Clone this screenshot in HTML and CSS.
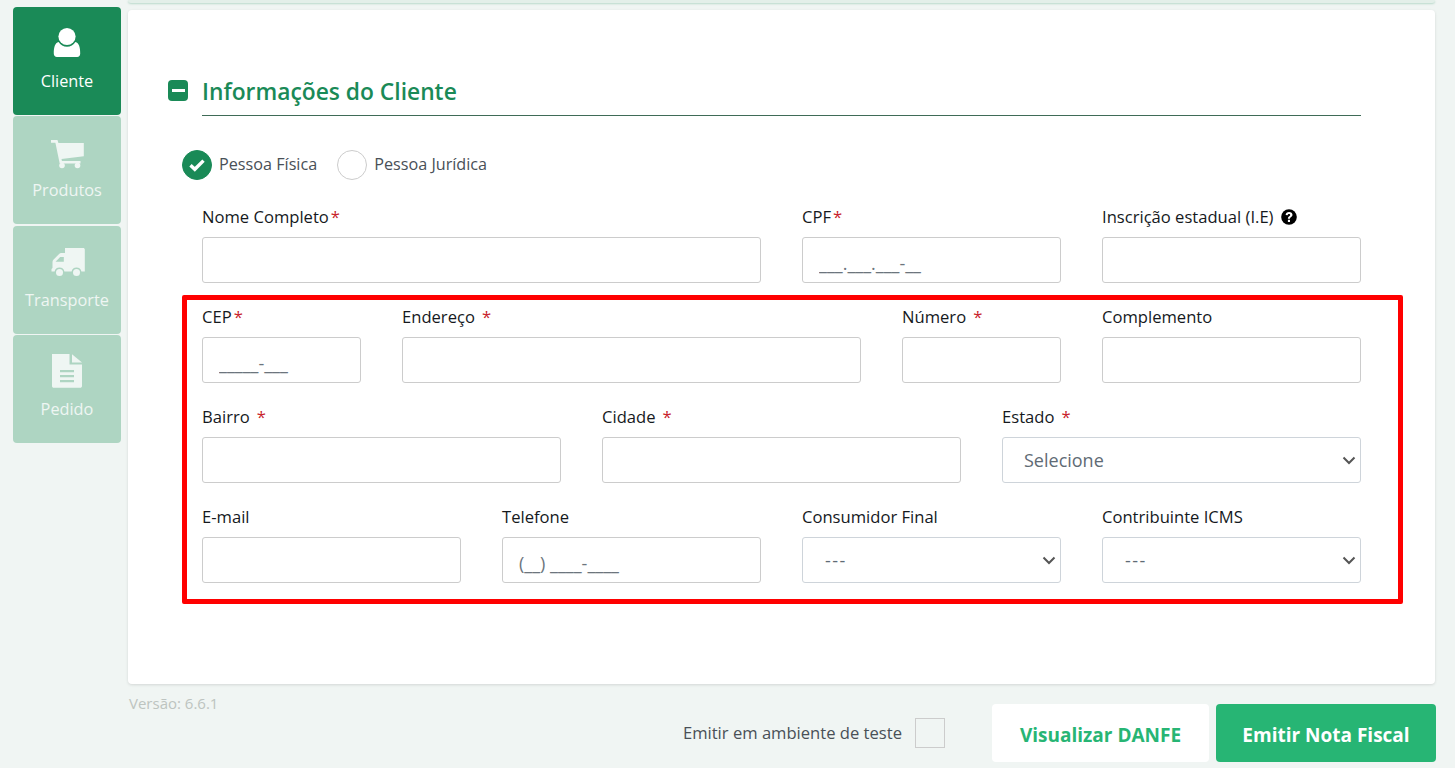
FILE: index.html
```html
<!DOCTYPE html>
<html lang="pt-BR">
<head>
<meta charset="utf-8">
<title>Emissão de Nota Fiscal</title>
<link rel="stylesheet" href="styles.css">
</head>
<body>
<div class="layout">
  <nav class="sidebar">
    <a class="tab active">
      <svg class="tab-icon" width="36" height="34" viewBox="0 0 36 34"><circle cx="18" cy="10.500" r="8.600" fill="currentColor"/><path d="M9.600 16.100c1.900 3 4.900 4.700 8.400 4.700s6.500-1.700 8.400-4.700c3.700 1 4.800 5.200 4.800 11.700 0 1.900-1.200 3.200-3 3.200H8c-1.900 0-3.200-1.300-3.200-3.200 0-6.500 1.100-10.700 4.800-11.700z" fill="currentColor"/></svg>
      <span>Cliente</span>
    </a>
    <a class="tab">
      <svg class="tab-icon" width="36" height="34" viewBox="0 0 36 34"><g transform="translate(1 2)"><path d="M1 3h6.500l.9 3.100H33.800v13.200L11.500 22l.4 2H30.500v2.600H9.700L5.400 5.700H1z" fill="currentColor"/><circle cx="12" cy="28.500" r="2.800" fill="currentColor"/><circle cx="27.500" cy="28.500" r="2.800" fill="currentColor"/></g></svg>
      <span>Produtos</span>
    </a>
    <a class="tab">
      <svg class="tab-icon" width="36" height="34" viewBox="0 0 36 34"><g transform="translate(1 1)"><path d="M15 2h18.200c.9 0 1.600.7 1.600 1.600v21.800h-3.400a5 5 0 0 0-9.800 0h-7.200a5 5 0 0 0-9.800 0H1.500v-2.300l1-1v-6.200c0-.8.300-1.500.9-2.100l5.700-5.800c.6-.6 1.300-.9 2.100-.9h3.800z" fill="currentColor"/><path d="M5.500 15.700l4.700-4.800h3.600v4.800z" class="cut"/><circle cx="9.500" cy="26.500" r="3.500" fill="currentColor"/><circle cx="26.500" cy="26.500" r="3.500" fill="currentColor"/></g></svg>
      <span>Transporte</span>
    </a>
    <a class="tab">
      <svg class="tab-icon file-icon" width="36" height="36" viewBox="0 0 36 36"><path d="M3 1h17.500v10.500H33V33c0 1-.8 1.800-1.800 1.800H4.800C3.800 34.800 3 34 3 33z" fill="currentColor"/><path d="M23 1.200L33 9.500H23z" fill="currentColor"/><path d="M11 17h14v2.200H11zM11 22h14v2.200H11zM11 27h14v2.200H11z" class="cut"/></svg>
      <span>Pedido</span>
    </a>
  </nav>

  <div class="content">
    <div class="top-strip"></div>
    <main class="card">
      <header class="section-head">
        <span class="minus-box"><span class="minus-bar"></span></span>
        <h2 class="section-title">Informações do Cliente</h2>
      </header>

      <div class="person-types">
        <label class="radio">
          <span class="radio-dot checked">
            <svg width="18" height="14" viewBox="0 0 18 14"><path d="M2.500 7.200l4.300 4.100 8.700-8.700" fill="none" stroke="#fff" stroke-width="3.400"/></svg>
          </span>
          <span>Pessoa Física</span>
        </label>
        <label class="radio">
          <span class="radio-dot"></span>
          <span>Pessoa Jurídica</span>
        </label>
      </div>

      <div class="form-grid">
        <div class="field span-6"><label class="field-label">Nome Completo<i class="req tight">*</i></label><input class="input" type="text"></div>
        <div class="field span-3"><label class="field-label">CPF<i class="req tight">*</i></label><input class="input" type="text" placeholder="___.___.___-__"></div>
        <div class="field span-3"><label class="field-label">Inscrição estadual (I.E)
          <svg class="help" width="16" height="16" viewBox="0 0 16 16"><circle cx="8" cy="8" r="7.800" fill="#000"/><path d="M4.600 6c.2-1.900 1.500-3 3.500-3 2 0 3.400 1.100 3.400 2.800 0 2.300-2.500 2.300-2.500 4H6.900c0-2.700 2.300-2.600 2.300-3.900 0-.6-.5-1-1.200-1-.8 0-1.200.5-1.400 1.300zM6.900 10.700H9v2.200H6.900z" fill="#fff"/></svg></label><input class="input" type="text"></div>

        <div class="field span-2"><label class="field-label">CEP<i class="req tight">*</i></label><input class="input" type="text" placeholder="_____-___"></div>
        <div class="field span-5"><label class="field-label">Endereço<i class="req">*</i></label><input class="input" type="text"></div>
        <div class="field span-2"><label class="field-label">Número<i class="req">*</i></label><input class="input" type="text"></div>
        <div class="field span-3"><label class="field-label">Complemento</label><input class="input" type="text"></div>

        <div class="field span-4"><label class="field-label">Bairro<i class="req">*</i></label><input class="input" type="text"></div>
        <div class="field span-4"><label class="field-label">Cidade<i class="req">*</i></label><input class="input" type="text"></div>
        <div class="field span-4"><label class="field-label">Estado<i class="req">*</i></label><select class="input select"><option>Selecione</option></select></div>

        <div class="field span-3"><label class="field-label">E-mail</label><input class="input" type="text"></div>
        <div class="field span-3"><label class="field-label">Telefone</label><input class="input" type="text" placeholder="(__) ____-____"></div>
        <div class="field span-3"><label class="field-label">Consumidor Final</label><select class="input select dashes"><option>---</option></select></div>
        <div class="field span-3"><label class="field-label">Contribuinte ICMS</label><select class="input select dashes"><option>---</option></select></div>

        <div class="highlight"></div>
      </div>
    </main>

    <footer class="footer">
      <span class="version">Versão: 6.6.1</span>
      <label class="test-env">Emitir em ambiente de teste<span class="test-check"></span></label>
      <button class="btn btn-light" type="button">Visualizar DANFE</button>
      <button class="btn btn-primary" type="button">Emitir Nota Fiscal</button>
    </footer>
  </div>
</div>
</body>
</html>
```

FILE: styles.css
```css
* { box-sizing: border-box; }
html, body { margin: 0; height: 768px; overflow: hidden; }
body {
  background: #f0f5f3;
  font-family: "Open Sans", "Noto Sans", sans-serif;
  font-size: 16px;
  color: #212529;
}
.layout { display: flex; align-items: flex-start; }

.sidebar {
  width: 128px;
  padding: 7px 7px 0 13px;
  display: flex;
  flex-direction: column;
  gap: 1.33px;
  flex: none;
}
.tab {
  height: 108px;
  border-radius: 4px;
  background: #aed5c2;
  color: #eff6f3;
  display: flex;
  flex-direction: column;
  align-items: center;
  padding-top: 19px;
  font-size: 16.3px;
}
.tab.active { background: #1a8a57; color: #fff; }
.tab-icon { display: block; margin-bottom: 10px; flex: none; }
.file-icon { margin-top: -1px; margin-bottom: 9px; }
.tab .cut { fill: #aed5c2; }

.content { width: 1307px; flex: none; }
.top-strip {
  height: 3px;
  background: #e3efe9;
  border-radius: 0 0 4px 4px;
  box-shadow: 0 1px 2px rgba(26,138,87,.25);
  margin-bottom: 7px;
}
.card {
  height: 674px;
  background: #fff;
  border-radius: 4px;
  box-shadow: 0 1px 3px rgba(0,0,0,.12);
  padding: 70px 74px 0 40px;
}
.section-head { display: flex; align-items: flex-start; }
.minus-box {
  width: 20px; height: 21px;
  margin-right: 14px;
  background: #1a8a57;
  border-radius: 4px;
  display: flex; align-items: center; justify-content: center;
  flex: none;
}
.minus-bar { width: 13px; height: 3px; background: #fff; }
.section-title {
  margin: 0;
  flex: 1;
  font-size: 22.8px;
  font-weight: 600;
  line-height: 24px;
  height: 36px;
  color: #1a8a57;
  border-bottom: 1px solid #3f6b57;
}
.person-types { display: flex; margin: 34px 0 0 14px; gap: 20px; }
.radio { display: flex; align-items: center; gap: 7px; color: #495057; font-size: 16.2px; line-height: 28px; height: 30px; }
.radio > span:last-child { margin-top: -2px; }
.radio-dot {
  width: 30px; height: 30px;
  border-radius: 50%;
  border: 1px solid #ccc;
  display: flex; align-items: center; justify-content: center;
  background: #fff;
}
.radio-dot.checked { background: #1a8a57; border-color: #1a8a57; }

.form-grid {
  position: relative;
  margin: 25px 0 0 34px;
  display: grid;
  grid-template-columns: repeat(12, 59px);
  column-gap: 41px;
  row-gap: 8px;
}
.field { display: flex; flex-direction: column; height: 92px; }
.span-2 { grid-column: span 2; }
.span-3 { grid-column: span 3; }
.span-4 { grid-column: span 4; }
.span-5 { grid-column: span 5; }
.span-6 { grid-column: span 6; }
.field-label {
  height: 32px;
  line-height: 24px;
  font-size: 16.6px;
  color: #15191d;
  white-space: nowrap;
}
.req { color: #c8232c; font-style: normal; margin-left: 7px; }
.req.tight { margin-left: 2px; }
.help { vertical-align: -2px; margin-left: 3px; }
.input {
  width: 100%;
  height: 46px;
  border: 1px solid #ccc;
  border-radius: 3px;
  background: #fff;
  padding: 6px 16px 0;
  font: 18px "Open Sans", "Noto Sans", sans-serif;
  color: #495057;
  outline: none;
}
.input::placeholder { color: #6c757d; opacity: 1; }
.select {
  appearance: none;
  -webkit-appearance: none;
  border-color: #ced4da;
  padding: 0 30px 0 21px;
  color: #5f6b75;
  background-image: url("data:image/svg+xml,%3Csvg xmlns='http://www.w3.org/2000/svg' width='14' height='9' viewBox='0 0 14 9'%3E%3Cpath d='M1.500 1.500L7 7l5.500-5.500' fill='none' stroke='%23555' stroke-width='2'/%3E%3C/svg%3E");
  background-repeat: no-repeat;
  background-position: right 4px center;
}
.select.dashes { letter-spacing: 1.5px; padding-left: 22px; }
.highlight {
  position: absolute;
  left: -20px; right: -42px;
  top: 90px; height: 309px;
  border: 5px solid #f00;
  border-radius: 2px;
  pointer-events: none;
}

.footer { display: flex; align-items: flex-start; padding-top: 20px; position: relative; }
.version { color: #bdc4c0; font-size: 15px; margin: -11px 0 0 1px; line-height: 20px; }
.test-env {
  margin-left: auto;
  margin-right: 47px;
  margin-top: 14px;
  display: flex; align-items: center; gap: 13px;
  height: 30px;
  color: #495057;
  font-size: 16.6px;
  line-height: 26px;
}
.test-check { width: 30px; height: 30px; border: 1px solid #ccc; display: block; margin-top: 0; }
.btn {
  height: 58px;
  border: 0;
  border-radius: 4px;
  padding: 4px 0 0;
  font: 700 19px "Open Sans", "Noto Sans", sans-serif;
}
.btn-light { width: 217px; background: #fff; color: #27b574; margin-right: 7px; }
.btn-primary { width: 220px; background: #27b574; color: #fff; margin-right: -1px; }
```
